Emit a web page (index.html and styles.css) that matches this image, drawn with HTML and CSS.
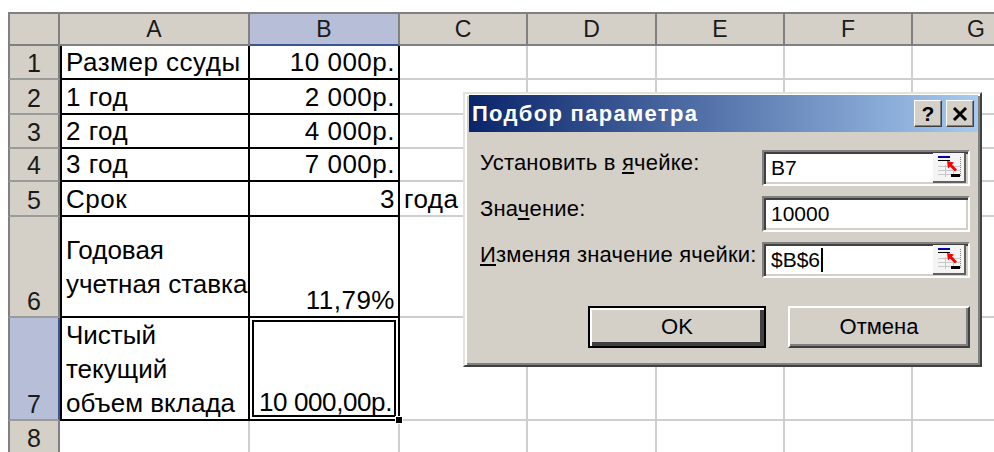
FILE: index.html
```html
<!DOCTYPE html>
<html lang="ru">
<head>
<meta charset="utf-8">
<title>Подбор параметра</title>
<link rel="stylesheet" href="styles.css">
</head>
<body>
<div class="sheet">
  <div class="grid">
    <div class="ch corner"></div>
    <div class="ch">A</div>
    <div class="ch sel">B</div>
    <div class="ch">C</div>
    <div class="ch">D</div>
    <div class="ch">E</div>
    <div class="ch">F</div>
    <div class="ch">G</div>

    <div class="rh">1</div>
    <div class="c ca">Размер ссуды</div>
    <div class="c cb num">10 000р.</div>
    <div class="c"></div><div class="c"></div><div class="c"></div><div class="c"></div><div class="c"></div>

    <div class="rh">2</div>
    <div class="c ca">1 год</div>
    <div class="c cb num">2 000р.</div>
    <div class="c"></div><div class="c"></div><div class="c"></div><div class="c"></div><div class="c"></div>

    <div class="rh">3</div>
    <div class="c ca">2 год</div>
    <div class="c cb num">4 000р.</div>
    <div class="c"></div><div class="c"></div><div class="c"></div><div class="c"></div><div class="c"></div>

    <div class="rh">4</div>
    <div class="c ca">3 год</div>
    <div class="c cb num">7 000р.</div>
    <div class="c"></div><div class="c"></div><div class="c"></div><div class="c"></div><div class="c"></div>

    <div class="rh">5</div>
    <div class="c ca">Срок</div>
    <div class="c cb num">3</div>
    <div class="c">года</div><div class="c"></div><div class="c"></div><div class="c"></div><div class="c"></div>

    <div class="rh">6</div>
    <div class="c ca wrap mid">Годовая<br>учетная ставка</div>
    <div class="c cb num">11,79%</div>
    <div class="c"></div><div class="c"></div><div class="c"></div><div class="c"></div><div class="c"></div>

    <div class="rh sel">7</div>
    <div class="c ca wrap mid">Чистый<br>текущий<br>объем вклада</div>
    <div class="c cb num active">10 000,00р.<span class="handle"></span></div>
    <div class="c"></div><div class="c"></div><div class="c"></div><div class="c"></div><div class="c"></div>

    <div class="rh">8</div>
    <div class="c"></div><div class="c"></div>
    <div class="c"></div><div class="c"></div><div class="c"></div><div class="c"></div><div class="c"></div>
  </div>
</div>

<div class="dlg">
  <div class="cap">
    <span class="cap-title">Подбор параметра</span>
    <span class="cap-btns">
      <span class="cbtn">?</span>
      <span class="cbtn">
        <svg width="16" height="14" viewBox="0 0 16 14"><path d="M2 1 L14 13 M14 1 L2 13" stroke="#000" stroke-width="3"/></svg>
      </span>
    </span>
  </div>
  <div class="dlg-body">
    <div class="form">
      <span class="lbl">Установить в <u>я</u>чейке:</span>
      <div class="field"><span class="val">B7</span>
        <span class="refbtn">
          <svg width="26" height="24" viewBox="0 0 13 12" shape-rendering="crispEdges">
            <path d="M1 5.5H12M1 7.5H12M1 9.5H12M4.5 5V11M8.5 5V11" stroke="#c8c8c8" stroke-width="0.5"/>
            <path d="M12 1V11" stroke="#808080" stroke-width="0.5" stroke-dasharray="0.5 0.5"/>
            <rect x="1" y="0.5" width="6" height="1" fill="#0000a8"/>
            <rect x="1" y="2.5" width="6" height="0.7" fill="#000"/>
            <path d="M5.5 3 L9 3.8 L8 4.8 L10.5 7.3 L9.5 8.3 L7 5.8 L6 6.8 Z" fill="#ff0000" shape-rendering="auto"/>
            <rect x="7.5" y="9.6" width="4.5" height="1.4" fill="#000"/>
          </svg>
        </span>
      </div>

      <span class="lbl">Зна<u>ч</u>ение:</span>
      <div class="field"><span class="val">10000</span></div>

      <span class="lbl"><u>И</u>зменяя значение ячейки:</span>
      <div class="field"><span class="val">$B$6<span class="caret"></span></span>
        <span class="refbtn">
          <svg width="26" height="24" viewBox="0 0 13 12" shape-rendering="crispEdges">
            <path d="M1 5.5H12M1 7.5H12M1 9.5H12M4.5 5V11M8.5 5V11" stroke="#c8c8c8" stroke-width="0.5"/>
            <path d="M12 1V11" stroke="#808080" stroke-width="0.5" stroke-dasharray="0.5 0.5"/>
            <rect x="1" y="0.5" width="6" height="1" fill="#0000a8"/>
            <rect x="1" y="2.5" width="6" height="0.7" fill="#000"/>
            <path d="M5.5 3 L9 3.8 L8 4.8 L10.5 7.3 L9.5 8.3 L7 5.8 L6 6.8 Z" fill="#ff0000" shape-rendering="auto"/>
            <rect x="7.5" y="9.6" width="4.5" height="1.4" fill="#000"/>
          </svg>
        </span>
      </div>
    </div>
    <div class="btns">
      <button class="btn def" type="button">OK</button>
      <button class="btn cancel" type="button">Отмена</button>
    </div>
  </div>
</div>
</body>
</html>
```

FILE: styles.css
```css
html, body {
  margin: 0;
  height: 452px;
  overflow: hidden;
  background: #fff;
}

body {
  position: relative;
  font-family: "Liberation Sans", Arial, sans-serif;
  color: #000;
}

/* ---- worksheet ---- */
.sheet {
  padding: 12px 0 0 8px;
}

.grid {
  display: grid;
  grid-template-columns: 52px 190px 150px 128px 129px 128px 128px 128px;
  grid-template-rows: 34px 34px 35px 34px 33px 35px 101px 103px 34px;
  width: max-content;
}

.grid > div {
  box-sizing: border-box;
  min-width: 0;
}

/* column headers */
.ch {
  background: #d4d0c8;
  border-top: 2px solid #808080;
  border-right: 2px solid #808080;
  border-bottom: 2px solid #808080;
  font-size: 23px;
  color: #1a1a1a;
  display: flex;
  align-items: center;
  justify-content: center;
}

.ch.corner {
  border-left: 2px solid #808080;
}

.ch.sel {
  background: #b6bed8;
  border-bottom-color: #3a5590;
}

/* row headers */
.rh {
  background: #d4d0c8;
  border-left: 2px solid #808080;
  border-right: 2px solid #808080;
  border-bottom: 2px solid #9a9a9a;
  font-size: 25px;
  line-height: 26px;
  color: #1a1a1a;
  display: flex;
  align-items: flex-end;
  justify-content: center;
  padding-bottom: 2px;
}

.rh.sel {
  background: #b6bed8;
  border-right-color: #3a5590;
}

/* cells */
.c {
  border-right: 2px solid #cfcfcf;
  border-bottom: 2px solid #cfcfcf;
  font-size: 26px;
  line-height: 26px;
  letter-spacing: 0.5px;
  padding: 0 3px 3px 4px;
  display: flex;
  align-items: flex-end;
  white-space: nowrap;
}

.c.ca {
  border-left: 2px solid #000;
  border-right-color: #000;
  border-bottom-color: #000;
}

.c.cb {
  border-right-color: #000;
  border-bottom-color: #000;
}

.c.num {
  justify-content: flex-end;
}

.c.wrap {
  line-height: 34px;
  letter-spacing: 0;
  padding-bottom: 0;
}

.c.mid {
  align-items: center;
}

.c.active {
  position: relative;
  box-shadow: inset 0 0 0 2px #fff, inset 0 0 0 4px #000;
  letter-spacing: -0.4px;
  padding-right: 6px;
  padding-bottom: 4px;
}

.handle {
  position: absolute;
  right: -5px;
  bottom: -5px;
  width: 6px;
  height: 6px;
  background: #000;
  border: 1px solid #fff;
  z-index: 2;
}

/* ---- goal seek dialog ---- */
.dlg {
  position: absolute;
  left: 463px;
  top: 92px;
  width: 519px;
  height: 275px;
  box-sizing: border-box;
  background: #d4d0c8;
  border: 2px solid;
  border-color: #e4e2dc #404040 #404040 #e4e2dc;
  box-shadow: inset 2px 2px 0 #fff, inset -2px -2px 0 #808080;
  padding: 1px 2px 4px 4px;
  font-size: 22px;
  z-index: 5;
}

.cap {
  height: 37px;
  background: linear-gradient(to right, #0a246a, #a6caf0);
  display: flex;
  align-items: center;
  justify-content: space-between;
  padding: 0 4px 0 3px;
}

.cap-title {
  color: #fff;
  font-weight: bold;
  font-size: 22px;
  letter-spacing: 1.3px;
}

.cap-btns {
  display: flex;
  gap: 4px;
}

.cbtn {
  width: 28px;
  height: 27px;
  box-sizing: border-box;
  background: #d4d0c8;
  border: 1px solid;
  border-color: #fff #404040 #404040 #fff;
  box-shadow: inset -1px -1px 0 #808080;
  display: flex;
  align-items: center;
  justify-content: center;
  font-weight: bold;
  font-size: 21px;
}

.dlg-body {
  padding: 18px 8px 0 11px;
}

.form {
  display: grid;
  grid-template-columns: minmax(0, 1fr) 208px;
  grid-auto-rows: 36px;
  row-gap: 10px;
}

.lbl {
  line-height: 26px;
  letter-spacing: 0.2px;
  white-space: nowrap;
}

.field {
  box-sizing: border-box;
  background: #fff;
  border: 2px solid;
  border-color: #808080 #fff #fff #808080;
  box-shadow: inset 2px 2px 0 #404040, inset -2px -2px 0 #d4d0c8;
  display: flex;
  align-items: center;
  justify-content: space-between;
  padding: 2px 2px 2px 7px;
}

.val {
  font-size: 21px;
  display: flex;
  align-items: center;
}

.caret {
  display: inline-block;
  width: 2px;
  height: 24px;
  background: #000;
  margin-left: 1px;
}

.refbtn {
  width: 33px;
  height: 30px;
  box-sizing: border-box;
  background: #f4f4f4;
  border-right: 2px solid #606060;
  border-bottom: 2px solid #606060;
  display: flex;
  align-items: center;
  justify-content: center;
}

.btns {
  display: flex;
  justify-content: flex-end;
  gap: 22px;
  margin-top: 28px;
}

.btn {
  height: 42px;
  box-sizing: border-box;
  font-family: "Liberation Sans", Arial, sans-serif;
  font-size: 22px;
  color: #000;
  background: #d4d0c8;
  border: 2px solid;
  border-color: #fff #404040 #404040 #fff;
  box-shadow: inset -2px -2px 0 #808080;
  padding: 0;
}

.btn.def {
  width: 178px;
  border-color: #000;
  box-shadow: inset 2px 2px 0 #fff, inset -4px -4px 0 #404040, inset -2px -2px 0 #808080;
}

.btn.cancel {
  width: 182px;
}
```
